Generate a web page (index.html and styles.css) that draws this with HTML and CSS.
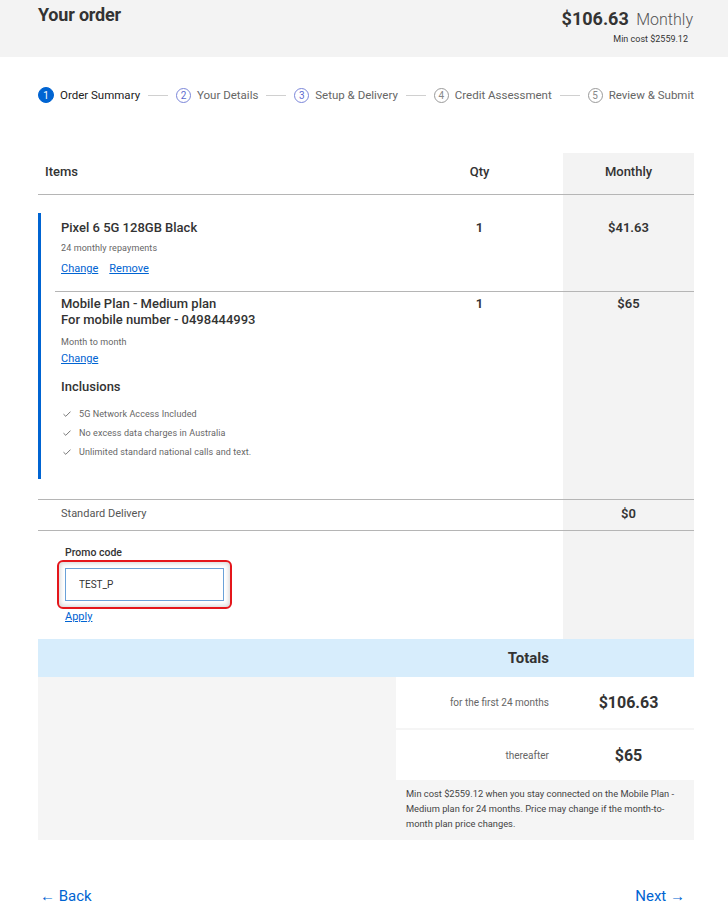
FILE: index.html
```html
<!DOCTYPE html>
<html lang="en">
<head>
<meta charset="utf-8">
<title>Your order</title>
<link rel="stylesheet" href="styles.css">
</head>
<body>
<header class="topbar">
  <h1 class="title">Your order</h1>
  <div class="summary">
    <div class="summary-price"><strong>$106.63</strong> <span class="per">Monthly</span></div>
    <div class="summary-min">Min cost $2559.12</div>
  </div>
</header>

<main class="page">
  <ol class="stepper">
    <li class="step active"><span class="num">1</span><span class="label">Order Summary</span></li>
    <li class="line"></li>
    <li class="step next"><span class="num">2</span><span class="label">Your Details</span></li>
    <li class="line"></li>
    <li class="step next"><span class="num">3</span><span class="label">Setup &amp; Delivery</span></li>
    <li class="line"></li>
    <li class="step"><span class="num">4</span><span class="label">Credit Assessment</span></li>
    <li class="line"></li>
    <li class="step"><span class="num">5</span><span class="label">Review &amp; Submit</span></li>
  </ol>

  <section class="table">
    <div class="row head">
      <div class="c-item">Items</div>
      <div class="c-qty">Qty</div>
      <div class="c-mon">Monthly</div>
    </div>

    <div class="items">
      <div class="row item first">
        <div class="c-item">
          <div class="name">Pixel 6 5G 128GB Black</div>
          <div class="sub">24 monthly repayments</div>
          <div class="links"><a href="#">Change</a><a href="#">Remove</a></div>
        </div>
        <div class="c-qty val">1</div>
        <div class="c-mon val">$41.63</div>
      </div>
      <div class="row item second">
        <div class="c-item">
          <div class="name tight">Mobile Plan - Medium plan<br>For mobile number - 0498444993</div>
          <div class="sub sub2">Month to month</div>
          <div class="links links2"><a href="#">Change</a></div>
          <div class="incl-title">Inclusions</div>
          <ul class="checks">
            <li><svg viewBox="0 0 8 6" width="8" height="6"><path d="M0.5 3.2 L2.8 5.3 L7.5 0.6" fill="none" stroke="#666" stroke-width="0.9"/></svg>5G Network Access Included</li>
            <li><svg viewBox="0 0 8 6" width="8" height="6"><path d="M0.5 3.2 L2.8 5.3 L7.5 0.6" fill="none" stroke="#666" stroke-width="0.9"/></svg>No excess data charges in Australia</li>
            <li><svg viewBox="0 0 8 6" width="8" height="6"><path d="M0.5 3.2 L2.8 5.3 L7.5 0.6" fill="none" stroke="#666" stroke-width="0.9"/></svg>Unlimited standard national calls and text.</li>
          </ul>
        </div>
        <div class="c-qty val tightval">1</div>
        <div class="c-mon val tightval">$65</div>
      </div>
    </div>

    <div class="row delivery">
      <div class="c-item">Standard Delivery</div>
      <div class="c-qty"></div>
      <div class="c-mon val">$0</div>
    </div>

    <div class="row promo">
      <div class="c-item">
        <label class="promo-label" for="promo">Promo code</label>
        <div class="promo-ring"><input id="promo" class="promo-input" type="text" value="TEST_P"></div>
        <a href="#" class="apply">Apply</a>
      </div>
    </div>
  </section>

  <section class="totals">
    <div class="totals-head">
      <div class="spacer"></div>
      <div class="t-label">Totals</div>
      <div class="t-val"></div>
    </div>
    <div class="totals-body">
      <div class="spacer"></div>
      <div class="t-right">
        <div class="t-row">
          <div class="t-label">for the first 24 months</div>
          <div class="t-val">$106.63</div>
        </div>
        <div class="t-row">
          <div class="t-label">thereafter</div>
          <div class="t-val">$65</div>
        </div>
        <p class="note">Min cost $2559.12 when you stay connected on the Mobile Plan - Medium plan for 24 months. Price may change if the month-to-month plan price changes.</p>
      </div>
    </div>
  </section>

  <nav class="footer-nav">
    <a href="#" class="nav-link">&#8592; Back</a>
    <a href="#" class="nav-link">Next &#8594;</a>
  </nav>
</main>
</body>
</html>
```

FILE: styles.css
```css
* { box-sizing: border-box; }
html, body { margin: 0; padding: 0; }
body {
  font-family: Roboto, "Liberation Sans", Arial, sans-serif;
  color: #333;
  background: #fff;
  width: 728px;
}
a { color: #0064d2; }

.topbar {
  height: 57px;
  background: #f3f3f3;
  display: flex;
  justify-content: space-between;
  padding: 4px 35px 0 38px;
}
.title {
  margin: 0;
  font-size: 18px;
  line-height: 22px;
  font-weight: 700;
  color: #333;
  letter-spacing: -0.2px;
}
.summary { text-align: right; }
.summary-price { font-size: 18px; line-height: 22px; padding-top: 4px; }
.summary-price strong { font-weight: 700; color: #333; }
.summary-price .per { font-size: 16px; font-weight: 300; color: #555; margin-left: 3px; }
.summary-min { font-size: 9px; line-height: 12px; color: #333; margin-top: 2px; padding-right: 5px; }

.page { width: 656px; margin-left: 38px; }

.stepper {
  list-style: none;
  margin: 30px 0 0;
  padding: 0;
  display: flex;
  align-items: center;
  height: 16px;
  white-space: nowrap;
}
.step { display: flex; align-items: center; font-size: 11.5px; color: #666; }
.step .num {
  width: 15px; height: 15px; border-radius: 50%;
  border: 1px solid #9a9a9a;
  display: flex; align-items: center; justify-content: center;
  font-size: 10px; color: #888; margin-right: 6px;
}
.step.active .num { background: #0064d2; border-color: #0064d2; color: #fff; width: 16px; height: 16px; }
.step.active .label { color: #222; }
.step.next .num { border-color: #7b86d9; color: #5b6bd0; }
.line { width: 29px; height: 1px; background: #d0d0d0; margin: 0 8px; }

.table {
  margin-top: 50px;
  background: linear-gradient(to right, transparent 525px, #f3f3f3 525px);
}
.row {
  display: grid;
  grid-template-columns: 1fr 167px 131px;
}
.c-qty, .c-mon { text-align: center; }
.head {
  height: 42px;
  align-items: center;
  padding-bottom: 4px;
  border-bottom: 1px solid #b5b5b5;
  font-size: 13px;
  font-weight: 500;
  color: #333;
}
.head .c-item { padding-left: 7px; }

.items {
  margin-top: 18px;
  border-left: 3px solid #0064d2;
  padding-left: 14px;
}
.item .c-item { padding-left: 6px; }
.item.first { padding: 6px 0 14px; border-bottom: 1px solid #b5b5b5; }
.item.second { padding: 4px 0 21px; }
.name { font-size: 13px; line-height: 18px; font-weight: 500; color: #333; }
.name.tight { line-height: 16px; }
.val { font-size: 13px; line-height: 18px; font-weight: 600; color: #333; }
.tightval { line-height: 16px; }
.sub { font-size: 9px; line-height: 12px; color: #666; margin-top: 5px; letter-spacing: 0.1px; }
.sub2 { margin-top: 8px; }
.links { font-size: 11px; line-height: 16px; margin-top: 7px; }
.links a { margin-right: 11px; }
.links2 { margin-top: 3px; }
.incl-title { font-size: 13px; line-height: 18px; font-weight: 500; margin-top: 11px; }
.checks { list-style: none; margin: 12px 0 0; padding: 0; }
.checks li {
  font-size: 9px; line-height: 12px; color: #666;
  display: flex; align-items: center;
  margin-top: 7px;
  padding-left: 2px;
  letter-spacing: 0.1px;
}
.checks li:first-child { margin-top: 0; }
.checks svg { margin-right: 8px; flex: none; }

.delivery {
  margin-top: 20px;
  border-top: 1px solid #b5b5b5;
  border-bottom: 1px solid #b5b5b5;
  height: 32px;
  align-items: center;
  padding-bottom: 3px;
}
.delivery .c-item { padding-left: 23px; font-size: 11px; color: #555; }

.promo .c-item { padding: 14px 0 15px 27px; }
.promo { grid-template-columns: 1fr; }
.promo-label { display: block; font-size: 10.5px; line-height: 14px; font-weight: 500; color: #333; padding-top: 1px; }
.promo-ring {
  width: fit-content;
  margin-left: -8px;
  padding: 6px;
  border: 2px solid #e4161b;
  border-radius: 6px;
  box-shadow: inset 0 0 5px 1px rgba(0,0,0,0.18);
}
.promo-input {
  display: block;
  width: 159px;
  height: 33px;
  border: 1px solid #6aa1d8;
  background: #fff;
  padding: 0 0 0 13px;
  font-family: inherit;
  font-size: 10px;
  color: #333;
  outline: none;
}
.apply { display: block; width: fit-content; font-size: 11px; line-height: 14px; margin-top: 1px; }

.totals-head {
  display: grid;
  grid-template-columns: 358px 167px 131px;
  height: 38px;
  align-items: center;
  background: #d7edfc;
}
.totals-head .t-label { text-align: right; padding-right: 14px; font-size: 15px; font-weight: 700; color: #333; }
.totals-body {
  display: grid;
  grid-template-columns: 358px 298px;
  background: #f5f5f5;
  height: 163px;
}
.t-right { display: flex; flex-direction: column; gap: 2px; }
.t-row {
  display: grid;
  grid-template-columns: 167px 131px;
  background: #fff;
  height: 51px;
  align-items: center;
}
.t-row + .t-row { height: 50px; }
.t-row .t-label { text-align: right; padding-right: 14px; font-size: 10px; color: #666; }
.t-row .t-val { text-align: center; font-size: 16px; font-weight: 700; color: #333; }
.note {
  margin: 4px 0 0;
  padding: 0 12px 0 10px;
  font-size: 9.3px;
  line-height: 15px;
  color: #444;
}

.footer-nav {
  display: flex;
  justify-content: space-between;
  margin-top: 46px;
  padding: 0 9px 0 2px;
}
.nav-link { font-size: 15px; line-height: 20px; text-decoration: none; color: #0064d2; }
```
